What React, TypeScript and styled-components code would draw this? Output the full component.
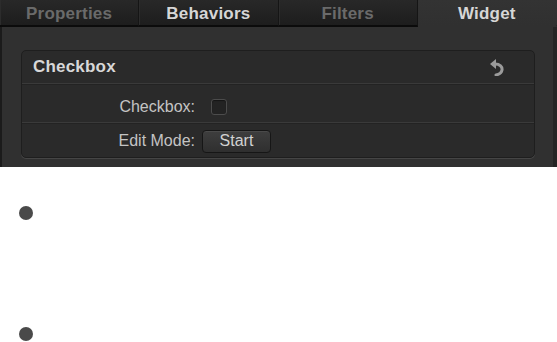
import React from 'react';
import styled, { createGlobalStyle } from 'styled-components';

const Global = createGlobalStyle`
  html, body {
    margin: 0;
    padding: 0;
    background: #ffffff;
  }
  body {
    font-family: "Liberation Sans", Arial, sans-serif;
  }
`;

const Page = styled.div`
  width: 557px;
  height: 342px;
  overflow: hidden;
  display: flex;
  flex-direction: column;
`;

const Inspector = styled.div`
  height: 167px;
  display: flex;
  flex-direction: column;
  background: #303030;
  border-left: 2px solid #1b1b1b;
  border-right: 4px solid #242424;
  box-sizing: border-box;
`;

const TabBar = styled.div`
  height: 28px;
  display: flex;
  margin-left: -2px;
  margin-right: -4px;
`;

const Tab = styled.div<{ $active?: boolean; $bright?: boolean }>`
  flex: 1;
  display: flex;
  align-items: center;
  justify-content: center;
  font-size: 17px;
  font-weight: bold;
  letter-spacing: 0.2px;
  color: ${(p) => (p.$bright || p.$active ? '#d6d6d6' : '#6a6a6a')};
  background: ${(p) =>
    p.$active
      ? 'linear-gradient(#333333, #303030)'
      : 'linear-gradient(#282828, #1d1d1d)'};
  border-bottom: 2px solid ${(p) => (p.$active ? '#303030' : '#0b0b0b')};
  border-right: 1px solid ${(p) => (p.$active ? 'transparent' : '#151515')};
  box-shadow: ${(p) => (p.$active ? 'none' : 'inset 1px 0 0 #2c2c2c')};
  box-sizing: border-box;
  padding-top: 2px;
`;

const Body = styled.div`
  flex: 1;
  padding: 23px 18px 9px 19px;
  display: flex;
  flex-direction: column;
`;

const Group = styled.div`
  flex: 1;
  display: flex;
  flex-direction: column;
  background: #2a2a2a;
  border: 1px solid #1e1e1e;
  border-radius: 5px;
  box-shadow: 0 1px 0 #454545;
`;

const GroupHeader = styled.div`
  height: 32px;
  display: flex;
  align-items: center;
  justify-content: space-between;
  padding: 0 30px 0 11px;
  font-size: 17px;
  font-weight: bold;
  letter-spacing: 0.2px;
  color: #d8d8d8;
`;

const Row = styled.div<{ $height: number; $offset: number }>`
  height: ${(p) => p.$height}px;
  box-sizing: border-box;
  padding-top: ${(p) => p.$offset}px;
  display: flex;
  align-items: center;
  gap: 7px;
  border-top: 1px solid #3a3a3a;
  box-shadow: inset 0 1px 0 #232323;
`;

const Label = styled.div`
  width: 173px;
  text-align: right;
  font-size: 16px;
  color: #c4c4c4;
`;

const Check = styled.div`
  width: 14px;
  height: 14px;
  margin-left: 9px;
  border-radius: 3px;
  background: #232323;
  border: 1px solid #4c4c4c;
  box-shadow: inset 0 1px 1px #141414;
`;

const Button = styled.div`
  width: 69px;
  height: 23px;
  box-sizing: border-box;
  display: flex;
  align-items: center;
  justify-content: center;
  border-radius: 4px;
  border: 1px solid #161616;
  background: linear-gradient(#3e3e3e, #2f2f2f);
  box-shadow: inset 0 1px 0 #4a4a4a;
  font-size: 16px;
  color: #d2d2d2;
`;

const List = styled.div`
  padding: 39px 0 0 19px;
  display: flex;
  flex-direction: column;
  gap: 107px;
`;

const Dot = styled.div`
  width: 14px;
  height: 14px;
  border-radius: 50%;
  background: #4a4a4a;
`;

const ResetIcon = () => (
  <svg width="14" height="17" viewBox="0 0 14 17">
    <polygon points="0,5 6,0 6,10" fill="#9b9b9b" />
    <path
      d="M5 5 C10 5 12.5 8 12 11 C11.5 14 8.5 15.5 6 16"
      stroke="#9b9b9b"
      strokeWidth="3"
      fill="none"
      strokeLinecap="round"
    />
  </svg>
);

export default function App() {
  return (
    <>
      <Global />
      <Page>
        <Inspector>
          <TabBar>
            <Tab>Properties</Tab>
            <Tab $bright>Behaviors</Tab>
            <Tab>Filters</Tab>
            <Tab $active>Widget</Tab>
          </TabBar>
          <Body>
            <Group>
              <GroupHeader>
                <span>Checkbox</span>
                <ResetIcon />
              </GroupHeader>
              <Row $height={39} $offset={8}>
                <Label>Checkbox:</Label>
                <Check />
              </Row>
              <Row $height={35} $offset={2}>
                <Label>Edit Mode:</Label>
                <Button>Start</Button>
              </Row>
            </Group>
          </Body>
        </Inspector>
        <List>
          <Dot />
          <Dot />
        </List>
      </Page>
    </>
  );
}
